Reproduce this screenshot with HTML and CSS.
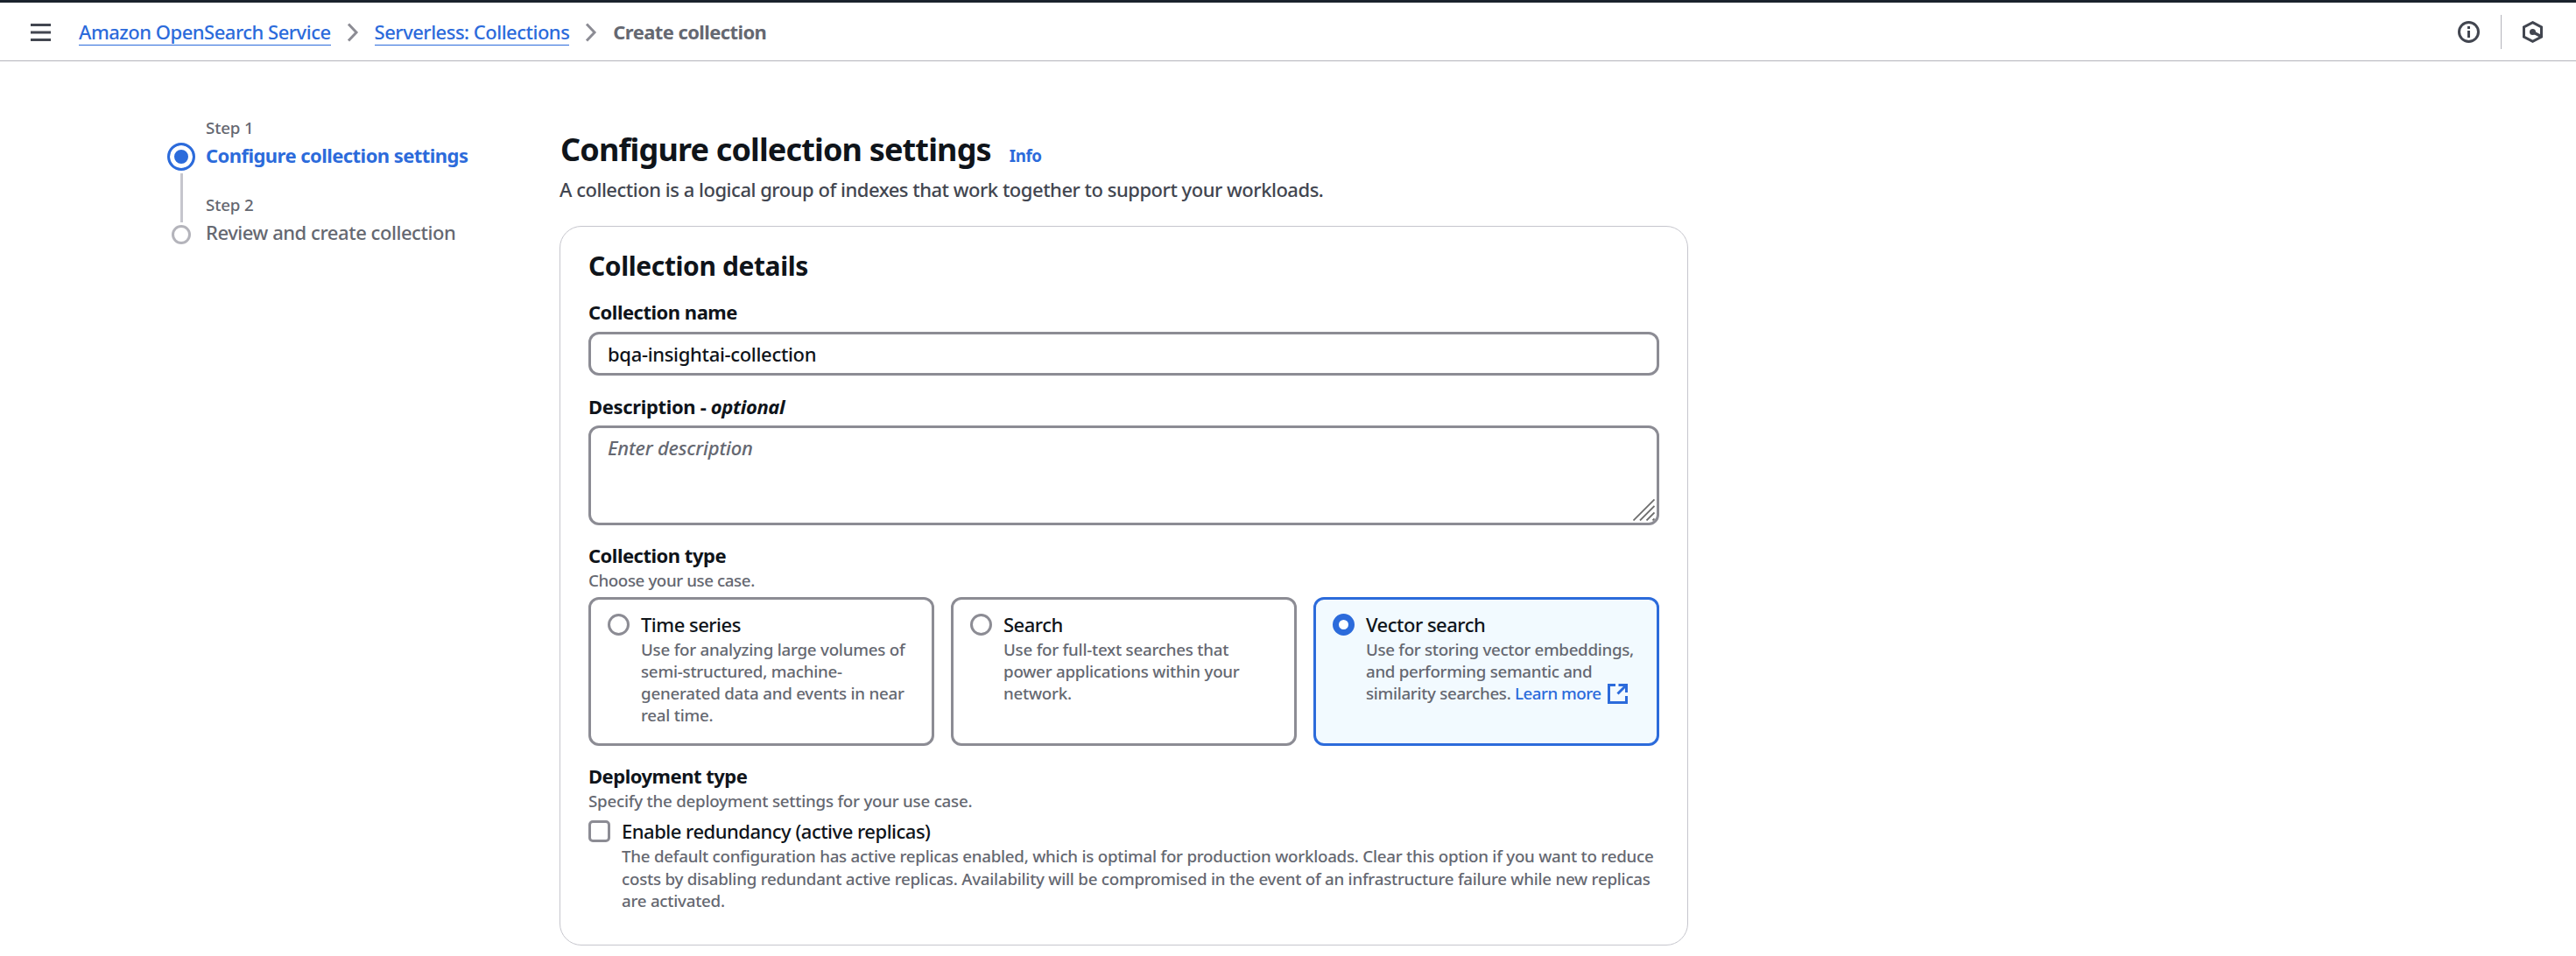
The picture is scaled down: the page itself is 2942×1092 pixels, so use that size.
FILE: index.html
```html
<!DOCTYPE html>
<html lang="en">
<head>
<meta charset="utf-8">
<title>Create collection</title>
<link rel="stylesheet" href="styles.css">
</head>
<body>
<header class="topbar">
  <svg class="menu-icon" width="23" height="20" viewBox="0 0 23 20"><path d="M0 1.500h23M0 10h23M0 18.500h23" stroke="#424650" stroke-width="3"/></svg>
  <nav class="crumbs">
    <a class="crumb-link" href="#">Amazon OpenSearch Service</a>
    <svg class="chevron" width="14" height="22" viewBox="0 0 14 22"><path d="M2 1.500l9 9.500-9 9.500" fill="none" stroke="#8c8c94" stroke-width="3"/></svg>
    <a class="crumb-link" href="#">Serverless: Collections</a>
    <svg class="chevron" width="14" height="22" viewBox="0 0 14 22"><path d="M2 1.500l9 9.500-9 9.500" fill="none" stroke="#8c8c94" stroke-width="3"/></svg>
    <span class="crumb-current">Create collection</span>
  </nav>
  <div class="tools">
    <svg width="25" height="25" viewBox="0 0 25 25"><circle cx="12.500" cy="12.500" r="11" fill="none" stroke="#424650" stroke-width="3"/><path d="M11 6h3v3h-3zM11 11h3v8h-3z" fill="#424650"/></svg>
    <span class="divider"></span>
    <svg width="23" height="25" viewBox="0 0 23 25"><path d="M11.500 1.700L21.500 7v11L11.500 23.300 1.500 18V7z" fill="none" stroke="#424650" stroke-width="3"/><circle cx="11.500" cy="12.500" r="3.500" fill="#424650"/><path d="M11.500 12.500l9.500 5" stroke="#424650" stroke-width="3.300"/></svg>
  </div>
</header>

<div class="page">
  <nav class="steps">
    <div class="rail"><span class="dot-active"></span><span class="rail-line"></span><span class="dot"></span></div>
    <ol class="step-list">
      <li><div class="step-label">Step 1</div><div class="step-title step-current">Configure collection settings</div></li>
      <li><div class="step-label">Step 2</div><div class="step-title">Review and create collection</div></li>
    </ol>
  </nav>

  <main class="content">
    <div class="heading"><h1>Configure collection settings</h1><a class="info" href="#">Info</a></div>
    <p class="intro">A collection is a logical group of indexes that work together to support your workloads.</p>

    <section class="panel">
      <h2>Collection details</h2>

      <label class="field-label" for="name">Collection name</label>
      <input class="control text-input" id="name" type="text" value="bqa-insightai-collection">

      <label class="field-label label-optional" for="desc">Description - <i>optional</i></label>
      <div class="area-wrap">
        <textarea class="control text-area" id="desc" placeholder="Enter description"></textarea>
        <svg class="grip" width="25" height="25" viewBox="0 0 25 25"><path d="M.5 24.500l24-24M8 24.500L24.500 8M15.500 24.500l9-9M22.500 24.500l2-2" stroke="#6e6e6e" stroke-width="1.800"/></svg>
      </div>

      <div class="field-label">Collection type</div>
      <div class="hint hint-tight">Choose your use case.</div>
      <div class="tiles">
        <div class="tile">
          <span class="radio"></span>
          <div><div class="option">Time series</div><div class="hint">Use for analyzing large volumes of<br>semi-structured, machine-<br>generated data and events in near<br>real time.</div></div>
        </div>
        <div class="tile">
          <span class="radio"></span>
          <div><div class="option">Search</div><div class="hint">Use for full-text searches that<br>power applications within your<br>network.</div></div>
        </div>
        <div class="tile tile-selected">
          <span class="radio radio-on"></span>
          <div><div class="option">Vector search</div><div class="hint hint-vector">Use for storing vector embeddings,<br>and performing semantic and<br>similarity searches. <a class="learn" href="#">Learn more<svg class="external" width="23" height="23" viewBox="0 0 23 23"><path d="M9 1.500H1.500v20h20V14M12.500 1.500h9V10M21 2L11.500 11.500" fill="none" stroke="#2c6bdb" stroke-width="3"/></svg></a></div></div>
        </div>
      </div>

      <div class="field-label">Deployment type</div>
      <div class="hint">Specify the deployment settings for your use case.</div>
      <div class="check-row">
        <span class="checkbox"></span>
        <div><div class="option">Enable redundancy (active replicas)</div><div class="hint hint-long">The default configuration has active replicas enabled, which is optimal for production workloads. Clear this option if you want to reduce<br>costs by disabling redundant active replicas. Availability will be compromised in the event of an infrastructure failure while new replicas<br>are activated.</div></div>
      </div>
    </section>
  </main>
</div>
</body>
</html>
```
FILE: styles.css
```css
* { box-sizing: border-box; }

body {
  margin: 0;
  background: #fff;
  color: #0f141a;
  font: 500 22px/31px "Noto Sans", "Open Sans", sans-serif;
}

a { color: #2c6bdb; text-decoration: none; }
svg { display: block; flex: none; }

.topbar {
  display: flex;
  align-items: center;
  height: 70px;
  padding: 1px 38px 0 35px;
  border-top: 3px solid #1b232d;
  border-bottom: 1px solid #b4b4bb;
}
.menu-icon { margin-right: 32px; }
.crumbs { display: flex; align-items: center; }
.crumb-link { padding-top: 1px; letter-spacing: -.5px; line-height: 29px; border-bottom: 1px solid #2c6bdb; }
.chevron { margin: 0 18px; }
.crumb-current { color: #656871; font-weight: 700; letter-spacing: -.6px; }
.tools { display: flex; align-items: center; margin-left: auto; gap: 24px; }
.divider { width: 1px; height: 39px; background: #b4b4bb; }

.page { display: flex; }

.steps { display: flex; gap: 12px; width: 448px; margin-left: 191px; padding-top: 63px; }
.rail { display: flex; flex-direction: column; align-items: center; gap: 3px; width: 32px; padding-top: 30px; }
.dot-active {
  width: 32px;
  height: 32px;
  border: 3px solid #2c6bdb;
  border-radius: 50%;
  background: #2c6bdb;
  box-shadow: inset 0 0 0 5px #fff;
}
.rail-line { width: 3px; height: 56px; background: #c6c6cd; }
.dot { width: 22px; height: 22px; border: 3px solid #b4b4bb; border-radius: 50%; }
.step-list { margin: 0; padding: 0; list-style: none; }
.step-list li { margin-bottom: 28px; }
.step-label { margin-bottom: 4px; color: #656871; font-size: 18.75px; line-height: 25px; letter-spacing: -.15px; }
.step-title { color: #656871; letter-spacing: -.45px; }
.step-current { color: #2c6bdb; font-weight: 700; letter-spacing: -.55px; }

.content { width: 1289px; padding-top: 77px; }
.heading { display: flex; align-items: baseline; gap: 21px; }
h1 { margin: 0; padding-left: 1px; font-size: 36px; line-height: 47px; letter-spacing: -.84px; }
.info { position: relative; top: 1px; font-size: 18.75px; font-weight: 700; line-height: 25px; letter-spacing: -.4px; }
.intro { margin: 7px 0 26px; color: #424650; letter-spacing: -.48px; }

.panel {
  height: 822px;
  padding: 26px 32px 24px;
  border: 1px solid #c6c6cd;
  border-radius: 25px;
}
h2 { margin: 0 0 18px; font-size: 30px; line-height: 38px; letter-spacing: -.4px; }
.field-label { display: block; font-weight: 700; letter-spacing: -.5px; }
.label-optional { letter-spacing: -.35px; }
.control {
  display: block;
  width: 100%;
  border: 3px solid #8c8c94;
  border-radius: 12px;
  background: #fff;
  color: #0f141a;
  font: inherit;
  letter-spacing: -.32px;
  outline: none;
}
.text-input { height: 50px; margin: 7px 0 20px; padding: 0 19px; }
.area-wrap { position: relative; margin: 6px 0 19px; }
.text-area { height: 114px; padding: 7px 19px; resize: none; }
.text-area::placeholder { color: #656871; font-style: italic; letter-spacing: -.2px; opacity: 1; }
.grip { position: absolute; right: 5px; bottom: 5px; }

.hint { color: #656871; font-size: 18.75px; line-height: 25px; letter-spacing: -.24px; }
.hint-tight { letter-spacing: -.42px; }
.hint-vector { letter-spacing: -.32px; }
.hint-long { line-height: 25.5px; letter-spacing: -.255px; }
.option { letter-spacing: -.5px; }

.tiles { display: grid; grid-template-columns: repeat(3, 1fr); gap: 19px; margin: 7px 0 19px; }
.tile {
  display: flex;
  gap: 13px;
  height: 170px;
  padding: 13px 0 0 19px;
  border: 3px solid #8c8c94;
  border-radius: 12px;
  white-space: nowrap;
}
.tile-selected { border-color: #2c6bdb; background: #f2faff; }
.radio {
  flex: none;
  width: 25px;
  height: 25px;
  margin-top: 3px;
  border: 3px solid #8c8c94;
  border-radius: 50%;
  background: #fff;
}
.radio-on { border: 7.5px solid #2c6bdb; }
.learn { letter-spacing: -.5px; }
.external { display: inline-block; margin: -4px 0 0 7px; vertical-align: -5px; }

.check-row { display: flex; gap: 13px; margin-top: 7px; white-space: nowrap; }
.checkbox { flex: none; width: 25px; height: 25px; margin-top: 3px; border: 3px solid #8c8c94; border-radius: 5px; }
```
